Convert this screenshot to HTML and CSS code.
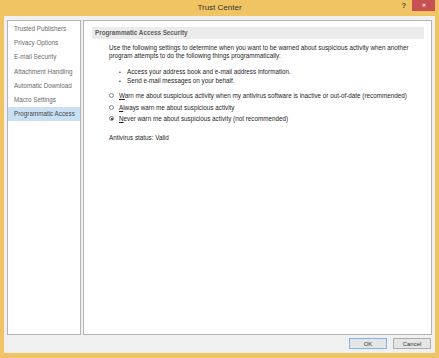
FILE: index.html
```html
<!DOCTYPE html>
<html lang="en">
<head>
    <meta charset="UTF-8">
    <title>Trust Center</title>
    <link rel="stylesheet" href="styles.css">
</head>
<body>
    <div class="window">
        <div class="titlebar">
            <div></div>
            <div class="title">Trust Center</div>
            <div class="controls">
                <span class="help">?</span>
                <span class="close">&#x2715;</span>
            </div>
        </div>

        <div class="client">
            <div class="panes">
                <ul class="nav">
                    <li>Trusted Publishers</li>
                    <li>Privacy Options</li>
                    <li>E-mail Security</li>
                    <li>Attachment Handling</li>
                    <li>Automatic Download</li>
                    <li>Macro Settings</li>
                    <li class="active">Programmatic Access</li>
                </ul>

                <div class="content">
                    <div class="section-title">Programmatic Access Security</div>
                    <p class="intro">Use the following settings to determine when you want to be warned about suspicious activity when another<br>program attempts to do the following things programmatically:</p>
                    <ul class="bullets">
                        <li>Access your address book and e-mail address information.</li>
                        <li>Send e-mail messages on your behalf.</li>
                    </ul>
                    <div class="options">
                        <label class="option"><span class="radio"></span><span><u>W</u>arn me about suspicious activity when my antivirus software is inactive or out-of-date (recommended)</span></label>
                        <label class="option"><span class="radio"></span><span><u>A</u>lways warn me about suspicious activity</span></label>
                        <label class="option"><span class="radio checked"></span><span><u>N</u>ever warn me about suspicious activity (not recommended)</span></label>
                    </div>
                    <p class="status">Antivirus status: Valid</p>
                </div>
            </div>

            <div class="footer">
                <button class="btn default">OK</button>
                <button class="btn">Cancel</button>
            </div>
        </div>
    </div>
</body>
</html>
```

FILE: styles.css
```css
body {
    margin: 0;
    font-family: "Liberation Sans", Arial, sans-serif;
    color: #333;
}

.window {
    width: 439px;
    height: 358px;
    background-color: #f0c462;
    display: flex;
    flex-direction: column;
    box-sizing: border-box;
}

.titlebar {
    height: 16px;
    display: grid;
    grid-template-columns: 1fr auto 1fr;
    align-items: start;
}

.title {
    font-size: 8px;
    line-height: 15px;
    color: #333;
}

.controls {
    display: flex;
    justify-content: flex-end;
    align-items: flex-start;
    padding-right: 4px;
}

.help {
    font-size: 7px;
    font-weight: bold;
    line-height: 11px;
    color: #444;
    margin-right: 6px;
}

.close {
    width: 23px;
    height: 11px;
    background-color: #c75050;
    color: #fff;
    font-size: 5px;
    line-height: 11px;
    text-align: center;
    font-weight: bold;
}

.client {
    flex: 1;
    margin: 0 4px 5px 4px;
    background-color: #f0f0f0;
    padding: 4px 3px 0 3px;
    display: flex;
    flex-direction: column;
}

.panes {
    display: flex;
    gap: 2px;
    height: 315px;
}

.nav {
    width: 74px;
    margin: 0;
    padding: 0;
    list-style: none;
    background-color: #fff;
    border: 1px solid #b4b4b4;
    box-sizing: border-box;
    padding-top: 1px;
}

.nav li {
    height: 14.2px;
    line-height: 14.2px;
    padding-left: 6px;
    font-size: 6.3px;
    color: #6a6a6a;
    white-space: nowrap;
}

.nav li.active {
    background-color: #c8e0f4;
    color: #4a4a4a;
}

.content {
    flex: 1;
    background-color: #fff;
    border: 1px solid #b4b4b4;
    box-sizing: border-box;
    padding: 6px 7px 0 8px;
}

.section-title {
    height: 12px;
    line-height: 12px;
    background-color: #ebebeb;
    padding-left: 3px;
    font-size: 6.3px;
    font-weight: bold;
    color: #5e5e5e;
}

.intro {
    margin: 5px 0 0 17px;
    font-size: 6.3px;
    line-height: 7.5px;
    color: #1e1e1e;
    white-space: nowrap;
}

.bullets {
    margin: 9px 0 0 35px;
    padding: 0;
    list-style: none;
    font-size: 6.3px;
    line-height: 7.7px;
    color: #1e1e1e;
}

.bullets li::before {
    content: "\2022";
    display: inline-block;
    width: 8px;
    margin-left: -8px;
    font-size: 5px;
}

.options {
    margin: 6.5px 0 0 17px;
    display: flex;
    flex-direction: column;
    gap: 3.5px;
}

.option {
    display: flex;
    align-items: center;
    gap: 5px;
    height: 8px;
    font-size: 6.3px;
    color: #1e1e1e;
    white-space: nowrap;
}

.radio {
    width: 5px;
    height: 5px;
    border: 1px solid #8a8a8a;
    border-radius: 50%;
    box-sizing: border-box;
    background-color: #fff;
    display: flex;
    align-items: center;
    justify-content: center;
}

.radio.checked::after {
    content: "";
    width: 2px;
    height: 2px;
    border-radius: 50%;
    background-color: #222;
}

.status {
    margin: 11px 0 0 17px;
    font-size: 6.3px;
    color: #1e1e1e;
}

.footer {
    display: flex;
    justify-content: flex-end;
    gap: 6px;
    padding: 3px 1px 0 0;
}

.btn {
    width: 38px;
    height: 11px;
    padding: 0;
    font-family: "Liberation Sans", Arial, sans-serif;
    font-size: 6px;
    color: #333;
    background-color: #e5e5e5;
    border: 1px solid #acacac;
}

.btn.default {
    border-color: #7eb4ea;
}
```
